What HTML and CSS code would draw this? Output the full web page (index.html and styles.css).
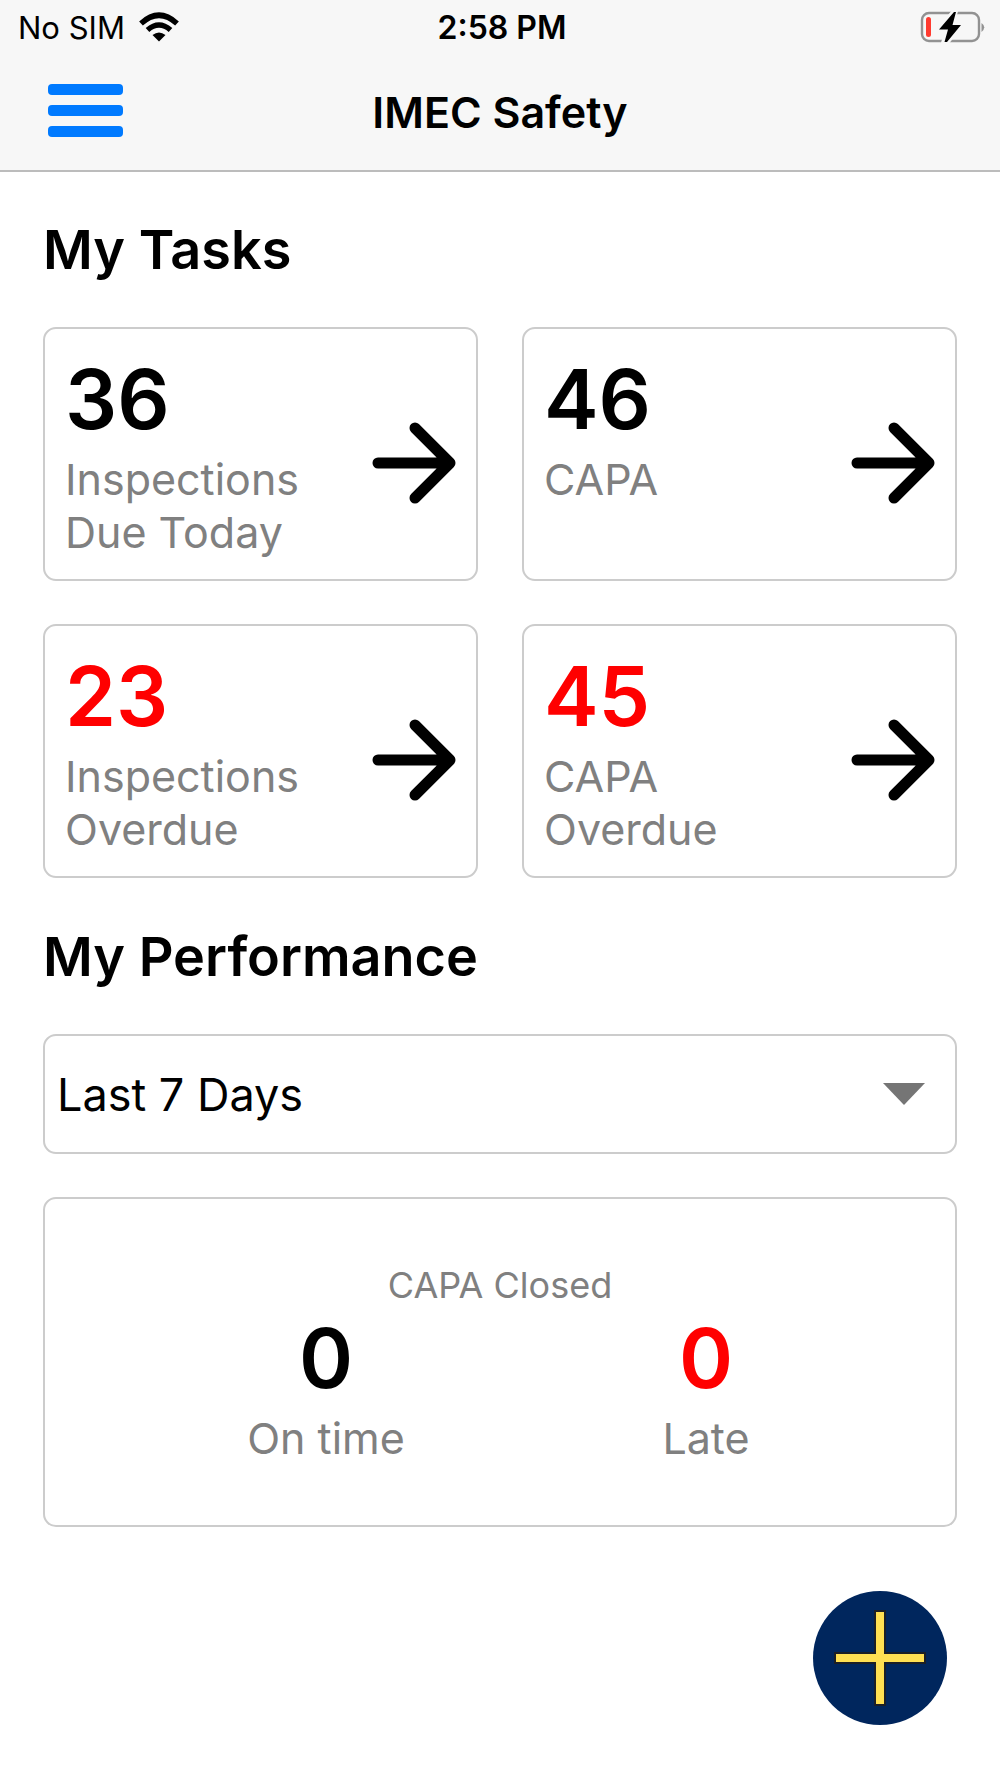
FILE: index.html
```html
<!DOCTYPE html>
<html lang="en">
<head>
<meta charset="utf-8">
<meta name="viewport" content="width=device-width, initial-scale=1">
<title>IMEC Safety</title>
<link rel="stylesheet" href="styles.css">
</head>
<body>
<svg class="defs" width="0" height="0" aria-hidden="true">
  <symbol id="arrow" viewBox="0 0 84 82">
    <path d="M6 41H78M43 6L78 41L43 76" fill="none" stroke="#000" stroke-width="11" stroke-linecap="round" stroke-linejoin="round"/>
  </symbol>
</svg>
<header class="header">
  <div class="status">
    <div class="carrier">
      <span>No SIM</span>
      <svg width="40" height="30" viewBox="0 0 40 30" aria-label="Wi-Fi">
        <g fill="none" stroke="#000">
          <path d="M2 11.500Q20 -5 38 11.500" stroke-width="5.500"/>
          <path d="M8.500 18Q20 8 31.500 18" stroke-width="5.500"/>
        </g>
        <path d="M13.500 23Q20 18 26.500 23L20 29.500Z"/>
      </svg>
    </div>
    <time class="clock">2:58 PM</time>
    <svg class="battery" width="66" height="34" viewBox="0 0 66 34" aria-label="Battery charging">
      <rect x="2" y="3" width="57" height="28" rx="7" fill="none" stroke="#929292" stroke-width="2.400"/>
      <path d="M61.500 13Q67 17 61.500 22Z" fill="#929292"/>
      <rect x="6" y="7" width="5" height="20" rx="2.500" fill="#ff3b30"/>
      <path d="M34 1L18 20H27L23 33H27L41 15H32L36 1Z" stroke="#f7f7f7" stroke-width="4"/>
      <path d="M34 2L19 19.500H28L24.500 32H27L41 15H32.500L36 2Z"/>
    </svg>
  </div>
  <div class="navbar">
    <button class="menu" type="button" aria-label="Menu"><span></span><span></span><span></span></button>
    <h1 class="title">IMEC Safety</h1>
  </div>
</header>
<main class="content">
  <h2 class="heading">My Tasks</h2>
  <div class="tasks">
    <a class="card" href="#due">
      <span class="text"><strong class="count">36</strong><span class="label">Inspections<br>Due Today</span></span>
      <svg class="arrow" aria-hidden="true"><use href="#arrow"/></svg>
    </a>
    <a class="card" href="#capa">
      <span class="text"><strong class="count">46</strong><span class="label">CAPA</span></span>
      <svg class="arrow" aria-hidden="true"><use href="#arrow"/></svg>
    </a>
    <a class="card" href="#overdue">
      <span class="text"><strong class="count late">23</strong><span class="label">Inspections<br>Overdue</span></span>
      <svg class="arrow" aria-hidden="true"><use href="#arrow"/></svg>
    </a>
    <a class="card" href="#capa-overdue">
      <span class="text"><strong class="count late">45</strong><span class="label">CAPA<br>Overdue</span></span>
      <svg class="arrow" aria-hidden="true"><use href="#arrow"/></svg>
    </a>
  </div>
  <h2 class="heading">My Performance</h2>
  <div class="period">
    <select aria-label="Period">
      <option>Last 7 Days</option>
    </select>
    <svg class="caret" width="42" height="22" viewBox="0 0 42 22" aria-hidden="true"><path d="M0 0H42L21 22Z" fill="#757575"/></svg>
  </div>
  <section class="summary">
    <h3 class="caption">CAPA Closed</h3>
    <div class="totals">
      <div class="total"><strong class="count">0</strong><span class="label">On time</span></div>
      <div class="total"><strong class="count late">0</strong><span class="label">Late</span></div>
    </div>
  </section>
</main>
<button class="add" type="button" aria-label="Add">
  <svg width="134" height="134" viewBox="0 0 134 134">
    <circle cx="67" cy="67" r="67" fill="#00265d"/>
    <path d="M62 20H72V62H112V72H72V114H62V72H22V62H62Z" fill="#ffe052" stroke="#1b1f26" stroke-width="2"/>
  </svg>
</button>
</body>
</html>
```
FILE: styles.css
```css
* {
  box-sizing: border-box;
}

body {
  margin: 0;
  background: #fff;
  color: #000;
  font-family: Inter, "Liberation Sans", sans-serif;
}

h1, h2, h3 {
  margin: 0;
}

button {
  padding: 0;
  border: 0;
  background: none;
}

svg {
  display: block;
}

.defs {
  position: absolute;
}

.header {
  background: #f7f7f7;
  border-bottom: 2px solid #bcbcbc;
}

.status {
  display: grid;
  grid-template-columns: 1fr auto 1fr;
  align-items: center;
  height: 54px;
  padding: 0 14px 0 18px;
  font-size: 31px;
}

.carrier {
  display: flex;
  align-items: center;
  gap: 14px;
}

.clock {
  font-size: 32px;
  font-weight: 600;
}

.battery {
  justify-self: end;
}

.navbar {
  display: grid;
  grid-template-columns: 1fr auto 1fr;
  align-items: center;
  height: 116px;
  padding: 0 48px;
}

.menu {
  display: flex;
  flex-direction: column;
  gap: 10px;
  width: 75px;
  padding-bottom: 3px;
}

.menu span {
  height: 11px;
  border-radius: 4px;
  background: #007aff;
}

.title {
  font-size: 43px;
  font-weight: 600;
}

.content {
  padding: 44px 43px;
}

.heading {
  font-size: 54px;
  font-weight: 600;
  line-height: 68px;
}

.tasks {
  display: grid;
  grid-template-columns: 1fr 1fr;
  gap: 43px 44px;
  margin: 43px 0 45px;
}

.card,
.period,
.summary {
  border: 2px solid #ccc;
  border-radius: 13px;
}

.card {
  display: flex;
  justify-content: space-between;
  align-items: center;
  min-height: 254px;
  padding: 20px;
  color: inherit;
  text-decoration: none;
}

.text {
  display: flex;
  flex-direction: column;
  align-self: flex-start;
}

.count {
  font-size: 82px;
  font-weight: 600;
  line-height: 102px;
}

.late {
  color: #f00;
}

.label {
  margin-top: 2px;
  color: #808080;
  font-size: 43px;
  line-height: 53px;
}

.arrow {
  width: 84px;
  height: 100px;
  padding-top: 18px;
}

.period {
  display: grid;
  align-items: center;
  margin: 43px 0;
}

.period select,
.caret {
  grid-area: 1 / 1;
}

.period select {
  width: 100%;
  height: 116px;
  padding: 0 80px 0 12px;
  border: 0;
  border-radius: 11px;
  background: transparent;
  color: #000;
  font: inherit;
  font-size: 45px;
  appearance: none;
}

.caret {
  justify-self: end;
  margin-right: 30px;
  pointer-events: none;
}

.summary {
  padding: 63px 0 60px;
}

.caption {
  color: #808080;
  font-size: 36px;
  font-weight: 400;
  line-height: 46px;
  text-align: center;
}

.totals {
  display: grid;
  grid-template-columns: 1fr 1fr;
  padding: 0 59px 0 91px;
}

.total {
  display: flex;
  flex-direction: column;
  align-items: center;
}

.add {
  position: fixed;
  right: 53px;
  bottom: 53px;
  border-radius: 50%;
}
```
